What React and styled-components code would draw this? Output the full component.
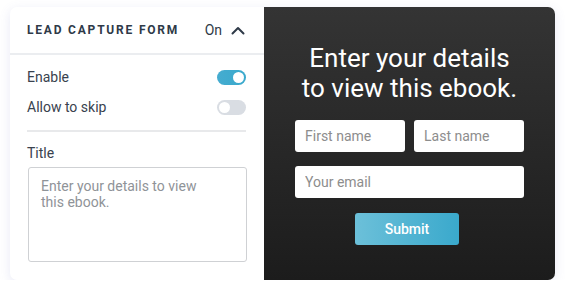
import React from 'react';
import styled, { createGlobalStyle } from 'styled-components';

const GlobalStyle = createGlobalStyle`
  html, body {
    margin: 0;
    padding: 0;
    background: #ffffff;
    font-family: Roboto, "Liberation Sans", sans-serif;
  }
`;

const App = () => (
  <Page>
    <GlobalStyle />
    <Card>
      <Settings>
        <Header>
          <HeaderTitle>Lead capture form</HeaderTitle>
          <HeaderState>
            On
            <svg width="14" height="9" viewBox="0 0 14 9" fill="none">
              <path d="M1.5 7.5L7 2l5.5 5.5" stroke="#2f3a48" strokeWidth="2" strokeLinecap="round" strokeLinejoin="round" />
            </svg>
          </HeaderState>
        </Header>
        <Body>
          <ToggleRow>
            <Label>Enable</Label>
            <Toggle on />
          </ToggleRow>
          <ToggleRow>
            <Label>Allow to skip</Label>
            <Toggle />
          </ToggleRow>
          <Divider />
          <FieldLabel>Title</FieldLabel>
          <TitleArea placeholder={'Enter your details to view\nthis ebook.'} />
        </Body>
      </Settings>
      <Preview>
        <PreviewTitle>Enter your details<br />to view this ebook.</PreviewTitle>
        <FormGrid>
          <PreviewInput placeholder="First name" />
          <PreviewInput placeholder="Last name" />
          <PreviewInput placeholder="Your email" wide />
        </FormGrid>
        <SubmitButton>Submit</SubmitButton>
      </Preview>
    </Card>
  </Page>
);

const Page = styled.div`
  padding: 7px 10px 0 10px;
`;

const Card = styled.div`
  display: flex;
  width: 545px;
  height: 273px;
  border-radius: 7px;
  background: #fff;
  box-shadow: 0 3px 12px rgba(90, 100, 190, 0.14);
`;

const Settings = styled.div`
  width: 254px;
  display: flex;
  flex-direction: column;
`;

const Header = styled.div`
  height: 46px;
  display: flex;
  align-items: center;
  justify-content: space-between;
  padding: 0 19px 0 17px;
  border-bottom: 2px solid #ebedf0;
`;

const HeaderTitle = styled.div`
  font-size: 12px;
  font-weight: 700;
  letter-spacing: 1.8px;
  text-transform: uppercase;
  color: #2f3a48;
`;

const HeaderState = styled.div`
  display: flex;
  align-items: center;
  gap: 9px;
  font-size: 14px;
  color: #2f3a48;
`;

const Body = styled.div`
  display: flex;
  flex-direction: column;
  padding: 7px 18px 0 17px;
`;

const ToggleRow = styled.div`
  height: 30px;
  display: flex;
  align-items: center;
  justify-content: space-between;
`;

const Label = styled.span`
  font-size: 14px;
  color: #39424e;
`;

const Toggle = styled.span`
  position: relative;
  width: 29px;
  height: 15px;
  border-radius: 8px;
  background: ${(p) => (p.on ? 'linear-gradient(90deg, #45acd0, #3aa9cc)' : '#d9dde3')};
  &::after {
    content: '';
    position: absolute;
    top: 2px;
    left: ${(p) => (p.on ? '16px' : '2px')};
    width: 11px;
    height: 11px;
    border-radius: 50%;
    background: #fff;
  }
`;

const Divider = styled.div`
  height: 2px;
  background: #e8e9eb;
  margin: 8px 0 13px 0;
`;

const FieldLabel = styled.div`
  font-size: 14px;
  color: #39424e;
  margin-bottom: 6px;
`;

const TitleArea = styled.textarea`
  box-sizing: border-box;
  width: 219px;
  height: 95px;
  margin-left: 1px;
  border: 1px solid #cfd1d4;
  border-radius: 3px;
  padding: 10px 12px;
  resize: none;
  font-family: Roboto, "Liberation Sans", sans-serif;
  font-size: 14px;
  line-height: 16px;
  &::placeholder {
    color: #8f9398;
  }
`;

const Preview = styled.div`
  flex: 1;
  display: flex;
  flex-direction: column;
  align-items: center;
  border-radius: 0 7px 7px 0;
  background: linear-gradient(180deg, #343434 0%, #1c1c1c 100%);
  padding-top: 36px;
`;

const PreviewTitle = styled.h1`
  margin: 0;
  font-size: 26px;
  font-weight: 400;
  line-height: 30px;
  text-align: center;
  color: #fff;
`;

const FormGrid = styled.div`
  display: grid;
  grid-template-columns: 110px 110px;
  gap: 14px 9px;
  margin-top: 17px;
`;

const PreviewInput = styled.input`
  box-sizing: border-box;
  grid-column: ${(p) => (p.wide ? '1 / span 2' : 'auto')};
  height: 32px;
  border: none;
  border-radius: 3px;
  padding: 0 10px;
  background: #fff;
  font-family: Roboto, "Liberation Sans", sans-serif;
  font-size: 14px;
  &::placeholder {
    color: #8d8d8d;
  }
`;

const SubmitButton = styled.button`
  margin-top: 15px;
  margin-right: 5px;
  width: 104px;
  height: 32px;
  border: none;
  border-radius: 3px;
  background: linear-gradient(90deg, #6cc0d9 0%, #3aa9cc 100%);
  color: #fff;
  font-family: Roboto, "Liberation Sans", sans-serif;
  font-size: 14px;
  font-weight: 500;
`;

export default App;
